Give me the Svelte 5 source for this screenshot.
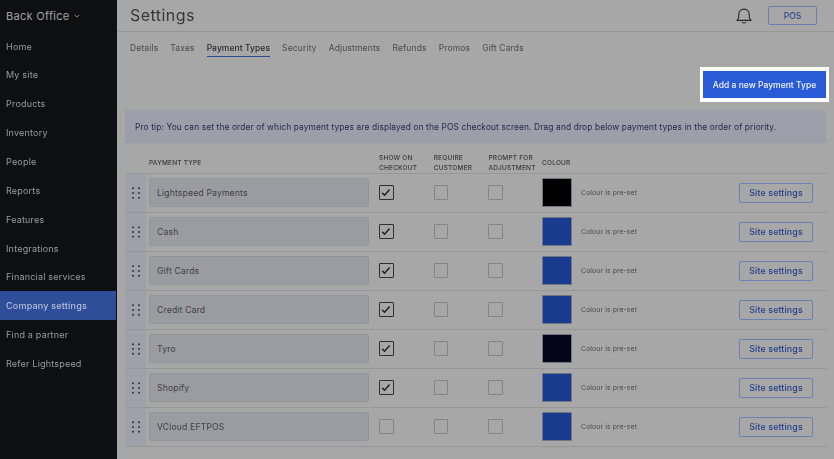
<script>
  const nav = ["Home", "My site", "Products", "Inventory", "People", "Reports", "Features", "Integrations", "Financial services", "Company settings", "Find a partner", "Refer Lightspeed"];
  const tabs = ["Details", "Taxes", "Payment Types", "Security", "Adjustments", "Refunds", "Promos", "Gift Cards"];
  const rows = [
    { name: "Lightspeed Payments", show: true, colour: "#000000" },
    { name: "Cash", show: true, colour: "#193b8f" },
    { name: "Gift Cards", show: true, colour: "#193b8f" },
    { name: "Credit Card", show: true, colour: "#193b8f" },
    { name: "Tyro", show: true, colour: "#05051a" },
    { name: "Shopify", show: true, colour: "#193b8f" },
    { name: "VCloud EFTPOS", show: false, colour: "#193b8f" }
  ];
</script>

<div class="page">
  <aside class="sidebar">
    <div class="brand">Back Office
      <svg width="6" height="4" viewBox="0 0 6 4"><path d="M.7.8 3 3.1 5.3.8" fill="none" stroke="#a3a3a3" stroke-width=".8" /></svg>
    </div>
    <nav>
      {#each nav as item}
        <a href="#top" class:active={item === "Company settings"}>{item}</a>
      {/each}
    </nav>
  </aside>

  <main>
    <header>
      <h1>Settings</h1>
      <svg class="bell" width="16" height="16" viewBox="0 0 16 16" fill="none" stroke="#2b2b2b" stroke-width="1.1">
        <path d="M.9 12.4c1.2-.9 1.8-2 1.8-3.6V6.4a5.3 5.3 0 0 1 10.6 0v2.4c0 1.6.6 2.7 1.8 3.6Z" stroke-linejoin="round" />
        <path d="M6.3 14.4c.8.6 2.6.6 3.4 0" stroke-linecap="round" />
      </svg>
      <button class="pos">POS</button>
    </header>

    <div class="tabs">
      {#each tabs as tab}
        <span class="tab" class:current={tab === "Payment Types"}>{tab}</span>
      {/each}
    </div>

    <div class="actions">
      <button class="add">Add a new Payment Type</button>
    </div>

    <div class="tip">Pro tip: You can set the order of which payment types are displayed on the POS checkout screen. Drag and drop below payment types in the order of priority.</div>

    <div class="table">
      <div class="row head">
        <div class="h-name">PAYMENT TYPE</div>
        <div class="col">SHOW ON<br />CHECKOUT</div>
        <div class="col">REQUIRE<br />CUSTOMER</div>
        <div class="col">PROMPT FOR<br />ADJUSTMENT</div>
        <div class="h-colour">COLOUR</div>
      </div>
      {#each rows as row}
        <div class="row">
          <div class="handle">
            <svg width="8" height="12" viewBox="0 0 8 12" fill="#33353a">
              <circle cx="1" cy="1.2" r="1" /><circle cx="7" cy="1.2" r="1" />
              <circle cx="1" cy="6" r="1" /><circle cx="7" cy="6" r="1" />
              <circle cx="1" cy="10.8" r="1" /><circle cx="7" cy="10.8" r="1" />
            </svg>
          </div>
          <div class="input">{row.name}</div>
          <div class="col">
            <span class="check" class:on={row.show}>
              {#if row.show}
                <svg width="10" height="9" viewBox="0 0 10 9"><path d="M1.2 4.9 3.6 7.2 8.6 1.4" fill="none" stroke="#222" stroke-width="1.5" /></svg>
              {/if}
            </span>
          </div>
          <div class="col"><span class="check"></span></div>
          <div class="col"><span class="check"></span></div>
          <div class="swatch" style="background: {row.colour}"></div>
          <div class="preset">Colour is pre-set</div>
          <button class="site">Site settings</button>
        </div>
      {/each}
    </div>
  </main>
</div>

<style>
  :global(body) {
    margin: 0;
    background: #a7a7a7;
  }

  .page {
    display: flex;
    width: 834px;
    height: 459px;
    overflow: hidden;
    font-family: Inter, "Liberation Sans", sans-serif;
    color: #3a3a3c;
    filter: blur(0.35px);
  }

  /* sidebar */
  .sidebar {
    width: 117px;
    flex: none;
    background: #0e0f12;
    color: #9c9c9c;
  }

  .brand {
    height: 31.7px;
    padding-left: 6px;
    display: flex;
    align-items: center;
    gap: 4px;
    font-size: 11px;
    letter-spacing: 0.3px;
    color: #a3a3a3;
  }

  nav {
    display: flex;
    flex-direction: column;
  }

  nav a {
    height: 28.85px;
    padding-left: 6px;
    display: flex;
    align-items: center;
    font-size: 9px;
    letter-spacing: 0.2px;
    color: #9c9c9c;
    text-decoration: none;
  }

  nav a.active {
    background: #2f4e9a;
    color: #b4bfd8;
    font-weight: 500;
    margin-right: 1px;
  }

  /* main column */
  main {
    flex: 1;
    min-width: 0;
  }

  header {
    height: 32px;
    box-sizing: border-box;
    border-bottom: 1px solid #979797;
    padding: 0 8px 2px 13px;
    display: flex;
    align-items: center;
  }

  h1 {
    margin: 0;
    font-size: 16px;
    font-weight: 400;
    letter-spacing: 0.45px;
    color: #37373a;
    flex: 1;
  }

  .bell {
    margin-right: 16px;
    margin-top: 2px;
  }

  .pos {
    width: 49px;
    height: 19px;
    margin-right: 9px;
    margin-top: 2px;
    padding: 0;
    font: 500 8.5px Inter, "Liberation Sans", sans-serif;
    color: #2a4690;
    background: transparent;
    border: 1px solid #6b7fae;
    border-radius: 2px;
  }

  .tabs {
    height: 27px;
    padding-left: 13px;
    display: flex;
    gap: 12px;
    align-items: flex-start;
    font-size: 8.5px;
    letter-spacing: 0.15px;
    color: #4a4a4c;
  }

  .tab {
    padding: 11px 0 3px;
  }

  .tab.current {
    font-weight: 500;
    letter-spacing: 0.07px;
    color: #2b2b30;
    border-bottom: 1px solid #2c4a96;
  }

  .actions {
    display: flex;
    justify-content: flex-end;
    padding: 8px 5px 0 0;
    height: 43px;
    box-sizing: border-box;
  }

  .add {
    width: 129px;
    height: 35px;
    padding: 0;
    box-sizing: border-box;
    background: #2a5bd7;
    color: #f2f5fd;
    border: 3px solid #fff;
    border-width: 4px 3px;
    font: 500 8.5px Inter, "Liberation Sans", sans-serif;
    letter-spacing: 0.02px;
    outline: none;
  }

  .tip {
    margin: 8px 8px 0;
    height: 33px;
    display: flex;
    align-items: center;
    padding-left: 10px;
    border-radius: 2px;
    background: #9c9ea9;
    color: #232a4a;
    font-size: 8.4px;
    letter-spacing: 0.12px;
    white-space: nowrap;
  }

  /* table */
  .table {
    margin: 2px 7px 0 8px;
  }

  .row {
    display: flex;
    align-items: center;
    height: 39px;
    box-sizing: border-box;
    padding-bottom: 1px;
    border-bottom: 1px solid #979797;
  }

  .row.head {
    height: 29px;
    padding-top: 8px;
    font-size: 6.5px;
    font-weight: 500;
    line-height: 10px;
    letter-spacing: 0.2px;
    color: #38383b;
  }

  .h-name {
    width: 254px;
    padding-left: 24px;
    box-sizing: border-box;
    flex: none;
  }

  .handle {
    width: 21px;
    align-self: stretch;
    flex: none;
    margin-bottom: -1px;
    background: #9ea1a9;
    display: flex;
    align-items: center;
    justify-content: center;
  }

  .input {
    width: 220px;
    height: 29px;
    box-sizing: border-box;
    margin: 0 10px 0 3px;
    flex: none;
    display: flex;
    align-items: center;
    padding-left: 7px;
    background: #9b9ca2;
    border: 1px solid #94959a;
    border-radius: 2px;
    font-size: 8.6px;
    letter-spacing: 0.17px;
    color: #3f4044;
  }

  .col {
    width: 54.7px;
    flex: none;
  }

  .head .col {
    white-space: nowrap;
  }

  .h-colour {
    margin-left: -1px;
  }

  .check {
    display: flex;
    align-items: center;
    justify-content: center;
    width: 14.5px;
    height: 14.5px;
    box-sizing: border-box;
    border: 1.5px solid #848486;
    border-radius: 1px;
  }

  .check.on {
    border-color: #2e2e33;
  }

  .swatch {
    width: 30px;
    height: 29px;
    box-sizing: border-box;
    margin-left: -1px;
    border: 1px solid #6f7684;
    border-radius: 1px;
    flex: none;
  }

  .preset {
    margin-left: 9px;
    flex: 1;
    font-size: 6.8px;
    letter-spacing: 0.12px;
    color: #48484b;
  }

  .site {
    width: 74px;
    height: 20px;
    margin-right: 14px;
    padding: 0;
    flex: none;
    font: 500 8.8px Inter, "Liberation Sans", sans-serif;
    letter-spacing: 0.15px;
    color: #223d8c;
    background: transparent;
    border: 1px solid #6a7fb2;
    border-radius: 2px;
  }
</style>
